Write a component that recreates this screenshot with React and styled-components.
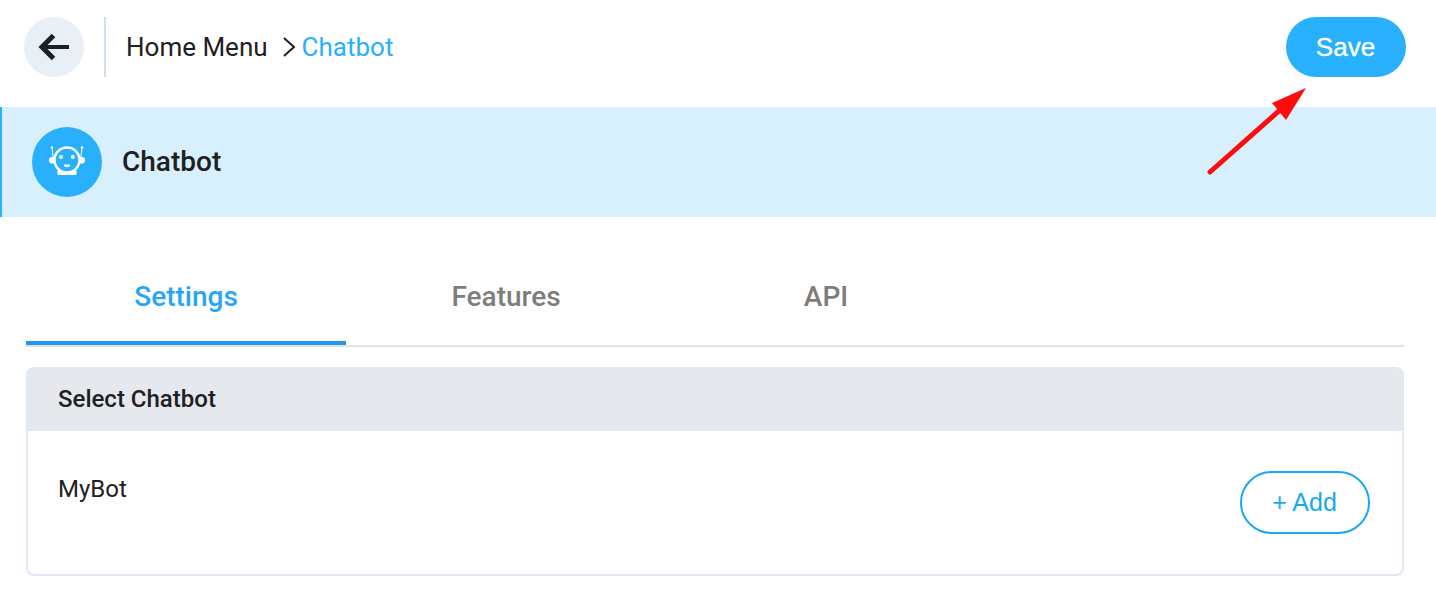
import React from 'react'
import styled, { createGlobalStyle } from 'styled-components'

const GlobalStyle = createGlobalStyle`
    html, body {
        margin: 0;
        padding: 0;
        background: #fff;
    }

    body {
        font-family: Roboto, 'Liberation Sans', sans-serif;
        color: #1f2023;
    }

    * {
        box-sizing: border-box;
    }
`;

const Page = styled.div`
    position: relative;
    width: 1436px;
    height: 604px;
    overflow: hidden;
`;

const TopBar = styled.header`
    display: flex;
    align-items: center;
    height: 107px;
    padding: 0 30px 13px 24px;
`;

const BackButton = styled.button`
    width: 60px;
    height: 60px;
    padding: 0;
    display: flex;
    align-items: center;
    justify-content: center;
    border: none;
    border-radius: 50%;
    background: #e8eff6;
`;

const Divider = styled.div`
    width: 2px;
    height: 60px;
    margin: 0 20px;
    background: #cfdfec;
`;

const Breadcrumb = styled.div`
    flex: 1;
    display: flex;
    align-items: center;
    font-size: 26px;
    line-height: 30px;
`;

const Chevron = styled.svg`
    width: 14px;
    height: 20px;
    margin: 0 6px 0 14px;
`;

const CurrentCrumb = styled.span`
    color: #29b0fc;
`;

const SaveButton = styled.button`
    width: 120px;
    height: 60px;
    padding: 0 1px 0 0;
    border: none;
    border-radius: 30px;
    background: #29b0fc;
    color: #fff;
    font-family: 'Liberation Sans', Arial, sans-serif;
    font-size: 26px;
    -webkit-text-stroke: 0.3px #fff;
`;

const Banner = styled.section`
    display: flex;
    align-items: center;
    height: 110px;
    padding-left: 30px;
    border-left: 2px solid #29b0fc;
    background: #d8f0fd;
`;

const BotBadge = styled.div`
    width: 70px;
    height: 70px;
    display: flex;
    align-items: center;
    justify-content: center;
    border-radius: 50%;
    background: #29b0fc;
`;

const BannerTitle = styled.h1`
    margin: 0 0 2px 20px;
    font-size: 28px;
    font-weight: 500;
`;

const Content = styled.main`
    padding: 30px 32px 0 26px;
`;

const Tabs = styled.nav`
    display: flex;
    border-bottom: 2px solid #e1e3e6;
`;

const Tab = styled.div`
    width: 320px;
    height: 98px;
    padding-top: 4px;
    display: flex;
    align-items: center;
    justify-content: center;
    font-size: 28px;
    font-weight: 500;
    color: ${props => (props.$active ? '#29a5f7' : '#7d7d7d')};
    border-bottom: 4px solid ${props => (props.$active ? '#2196f3' : 'transparent')};
`;

const Card = styled.section`
    height: 209px;
    margin-top: 20px;
    border: 2px solid #dfe8f4;
    border-radius: 8px;
    overflow: hidden;
`;

const CardHeader = styled.div`
    display: flex;
    align-items: center;
    height: 62px;
    padding-left: 30px;
    border-bottom: 2px solid #dfe8f4;
    background: #e5e8ec;
    font-size: 24px;
    font-weight: 500;
`;

const CardBody = styled.div`
    display: flex;
    justify-content: space-between;
    padding: 40px 32px 0 30px;
`;

const BotName = styled.div`
    margin-top: 5px;
    font-size: 24px;
    line-height: 27px;
`;

const AddButton = styled.button`
    width: 130px;
    height: 63px;
    padding: 0 1px 0 0;
    border: 2px solid #1aa9f0;
    border-radius: 32px;
    background: #fff;
    color: #1aa9f0;
    font-family: 'Liberation Sans', Arial, sans-serif;
    font-size: 25px;
`;

const PointerArrow = styled.svg`
    position: absolute;
    top: 80px;
    left: 1200px;
    width: 116px;
    height: 100px;
`;

const App = () => {
    return (
        <Page>
            <GlobalStyle />
            <TopBar>
                <BackButton aria-label="Back">
                    <svg width="32" height="30" viewBox="0 0 32 30" fill="none">
                        <path d="M31 15H4" stroke="#1f2023" strokeWidth="4" />
                        <path d="M15.500 3.500L4 15l11.500 11.500" stroke="#1f2023" strokeWidth="5" />
                    </svg>
                </BackButton>
                <Divider />
                <Breadcrumb>
                    Home Menu
                    <Chevron viewBox="0 0 14 20" fill="none">
                        <path d="M2 1l10 9-10 9" stroke="#1f2023" strokeWidth="2" />
                    </Chevron>
                    <CurrentCrumb>Chatbot</CurrentCrumb>
                </Breadcrumb>
                <SaveButton>Save</SaveButton>
            </TopBar>
            <Banner>
                <BotBadge>
                    <svg width="40" height="40" viewBox="0 0 40 40" fill="none">
                        <path d="M5 6l1.200 10M35 6L33.800 16" stroke="#fff" strokeWidth="1" />
                        <circle cx="5" cy="5.500" r="1.300" fill="#fff" />
                        <circle cx="35" cy="5.500" r="1.300" fill="#fff" />
                        <rect x="2" y="15" width="36" height="6.500" rx="3.250" fill="#fff" />
                        <rect x="10.500" y="28" width="19" height="5" rx="1" fill="#fff" />
                        <circle cx="20" cy="18" r="12.500" fill="#29b0fc" stroke="#fff" strokeWidth="2.400" />
                        <circle cx="14" cy="15" r="2" fill="#fff" />
                        <circle cx="25.800" cy="15" r="2" fill="#fff" />
                        <path d="M16.800 22.500h6.400a3.200 2.600 0 0 1-6.400 0z" fill="#fff" />
                    </svg>
                </BotBadge>
                <BannerTitle>Chatbot</BannerTitle>
            </Banner>
            <Content>
                <Tabs>
                    <Tab $active>Settings</Tab>
                    <Tab>Features</Tab>
                    <Tab>API</Tab>
                </Tabs>
                <Card>
                    <CardHeader>Select Chatbot</CardHeader>
                    <CardBody>
                        <BotName>MyBot</BotName>
                        <AddButton>+ Add</AddButton>
                    </CardBody>
                </Card>
            </Content>
            <PointerArrow viewBox="0 0 116 100" fill="none">
                <path d="M10 92L80 30" stroke="#ff0c0c" strokeWidth="5" strokeLinecap="round" />
                <path d="M106 8L72 23l14 17z" fill="#ff0c0c" />
            </PointerArrow>
        </Page>
    )
}

export default App
